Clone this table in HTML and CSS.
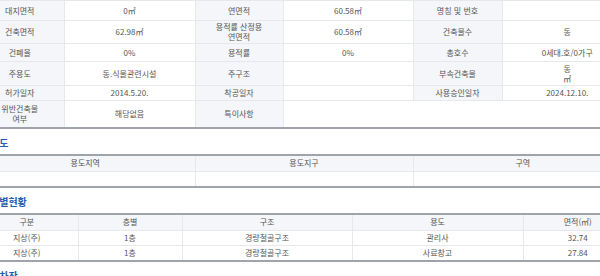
FILE: index.html
```html
<!DOCTYPE html>
<html lang="ko">

<head>
    <meta charset="UTF-8">
    <meta name="viewport" content="width=device-width, initial-scale=1.0">
    <title>건축물대장</title>
    <link rel="stylesheet" href="styles.css">
</head>

<body>
    <div class="page">
        <table class="info-table">
            <colgroup>
                <col style="width: 88px">
                <col style="width: 131px">
                <col style="width: 88px">
                <col style="width: 130px">
                <col style="width: 89px">
                <col style="width: 130px">
            </colgroup>
            <tr class="r20">
                <th>대지면적</th>
                <td>0㎡</td>
                <th>연면적</th>
                <td>60.58㎡</td>
                <th>명칭 및 번호</th>
                <td></td>
            </tr>
            <tr class="r23">
                <th>건축면적</th>
                <td>62.98㎡</td>
                <th>용적률 산정용<br>연면적</th>
                <td>60.58㎡</td>
                <th>건축물수</th>
                <td>동</td>
            </tr>
            <tr class="r18">
                <th>건폐율</th>
                <td>0%</td>
                <th>용적률</th>
                <td>0%</td>
                <th>총호수</th>
                <td>0세대.호/0가구</td>
            </tr>
            <tr class="r24">
                <th>주용도</th>
                <td>동.식물관련시설</td>
                <th>주구조</th>
                <td></td>
                <th>부속건축물</th>
                <td>동<br>㎡</td>
            </tr>
            <tr class="r15">
                <th>허가일자</th>
                <td>2014.5.20.</td>
                <th>착공일자</th>
                <td></td>
                <th>사용승인일자</th>
                <td>2024.12.10.</td>
            </tr>
            <tr class="r27">
                <th>위반건축물<br>여부</th>
                <td>해당없음</td>
                <th>특이사항</th>
                <td colspan="3"></td>
            </tr>
        </table>

        <h2 class="section-title">용도</h2>
        <table class="list-table">
            <colgroup>
                <col style="width: 219px">
                <col style="width: 218px">
                <col style="width: 219px">
            </colgroup>
            <tr class="head">
                <th>용도지역</th>
                <th>용도지구</th>
                <th>구역</th>
            </tr>
            <tr class="r15">
                <td></td>
                <td></td>
                <td></td>
            </tr>
        </table>

        <h2 class="section-title">층별현황</h2>
        <table class="list-table">
            <colgroup>
                <col style="width: 102px">
                <col style="width: 104px">
                <col style="width: 170px">
                <col style="width: 171px">
                <col style="width: 109px">
            </colgroup>
            <tr class="head">
                <th>구분</th>
                <th>층별</th>
                <th>구조</th>
                <th>용도</th>
                <th>면적(㎡)</th>
            </tr>
            <tr class="r15">
                <td>지상(주)</td>
                <td>1층</td>
                <td>경량철골구조</td>
                <td>관리사</td>
                <td>32.74</td>
            </tr>
            <tr class="r15">
                <td>지상(주)</td>
                <td>1층</td>
                <td>경량철골구조</td>
                <td>사료창고</td>
                <td>27.84</td>
            </tr>
        </table>

        <h2 class="section-title">주차장</h2>
    </div>
</body>

</html>
```

FILE: styles.css
```css
* {
    box-sizing: border-box;
}

body {
    margin: 0;
    font-family: "Noto Sans CJK KR", "Noto Sans", sans-serif;
    color: #555;
    background: #fff;
    overflow: hidden;
}

.page {
    width: 656px;
    margin-left: -24px;
}

table {
    width: 656px;
    table-layout: fixed;
    border-collapse: collapse;
    font-size: 8px;
    line-height: 10px;
}

th,
td {
    padding: 0 4px;
    text-align: center;
    font-weight: normal;
    border-bottom: 1px solid #e6e8eb;
    border-left: 1px solid #e6e8eb;
}

th:first-child,
td:first-child {
    border-left: none;
}

.info-table {
    border-top: 1px solid #e6e8eb;
    border-bottom: 2px solid #9fa4aa;
}

.info-table th {
    background-color: #f4f6f9;
}

.list-table {
    border-top: 2px solid #9fa4aa;
    border-bottom: 2px solid #9fa4aa;
}

.list-table .head th {
    background-color: #f4f6f9;
    height: 17px;
}

.r15 { height: 15px; }
.r18 { height: 18px; }
.r20 { height: 20px; }
.r23 { height: 23px; }
.r24 { height: 24px; }
.r27 { height: 27px; }

.section-title {
    margin: 7px 0 4px;
    padding-left: 14px;
    font-size: 10px;
    line-height: 14px;
    font-weight: bold;
    color: #2460ad;
}
```
